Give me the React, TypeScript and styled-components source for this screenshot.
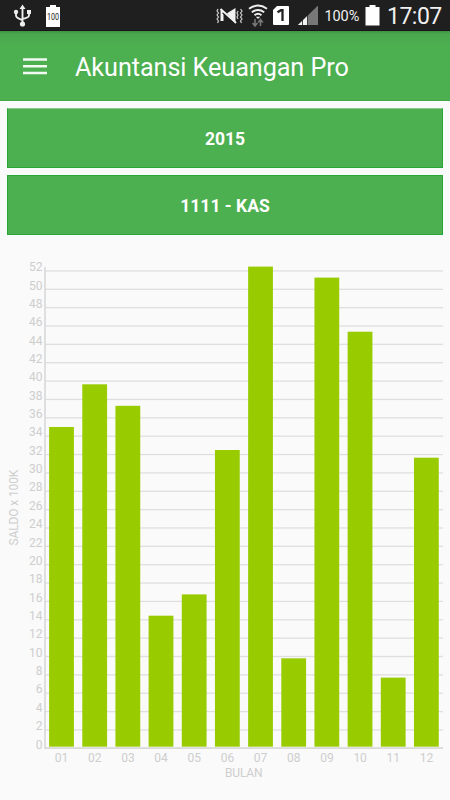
import React from "react";
import styled, { createGlobalStyle } from "styled-components";

const GlobalStyle = createGlobalStyle`
  body { margin: 0; background: #fafafa; font-family: Roboto, sans-serif; }
`;

const Screen = styled.div`
  width: 450px;
  height: 800px;
  display: flex;
  flex-direction: column;
  overflow: hidden;
  background: #fafafa;
`;

const StatusBar = styled.div`
  height: 31px;
  flex: none;
  display: flex;
  align-items: center;
  justify-content: space-between;
  padding: 0 7px 0 13px;
  box-sizing: border-box;
  background: #1f1f1f;
  color: #f0f0f0;
  border-bottom: 1px solid #1a141b;
`;

const StatusGroup = styled.div`
  display: flex;
  align-items: center;
  height: 31px;
  padding-top: 2px;
  box-sizing: border-box;
`;

const Icon = styled.svg<{ $gap?: number }>`
  display: block;
  flex: none;
  margin-right: ${(p) => p.$gap ?? 0}px;
`;

const BatteryLevel = styled.span`
  width: 36px;
  margin-right: 4px;
  font-size: 14.5px;
  line-height: 29px;
  letter-spacing: -0.1px;
  white-space: nowrap;
`;

const Clock = styled.span`
  width: 56px;
  font-size: 23px;
  line-height: 29px;
  letter-spacing: -0.5px;
  white-space: nowrap;
`;

const AppBar = styled.header`
  height: 70px;
  flex: none;
  display: flex;
  align-items: center;
  padding: 1px 0 0 23px;
  gap: 28px;
  box-sizing: border-box;
  background: linear-gradient(#419345 0, #4aa74e 3px, #4caf50 14px);
  border-bottom: 1px solid #43a847;
`;

const Title = styled.h1`
  margin: 3px 0 0;
  color: #fff;
  font-size: 25.2px;
  font-weight: 400;
  line-height: 30px;
  letter-spacing: -0.06px;
  white-space: nowrap;
`;

const Filters = styled.div`
  display: flex;
  flex: none;
  flex-direction: column;
  gap: 7px;
  padding: 7px 7px 0;
`;

const FilterButton = styled.button<{ $softTop?: boolean }>`
  height: 60px;
  padding: 1px 0 0 0;
  box-sizing: border-box;
  border: 1px solid #29a636;
  border-top-color: ${(p) => (p.$softTop ? "#8cc990" : "#29a636")};
  border-radius: 0;
  background: #4caf50;
  color: #fff;
  font: 700 17.5px Roboto, sans-serif;
`;

const Chart = styled.svg`
  display: block;
  flex: none;
  margin-top: 14px;
  font-family: Roboto, sans-serif;
  font-size: 12px;
`;

const AxisText = styled.text`
  fill: #cecece;
`;

const BASE = 748.2;
const STEP = 18.36;
const PITCH = 33.17;
const ticks = Array.from({ length: 27 }, (_, i) => i * 2);
const bars = [
  { month: "01", top: 427 },
  { month: "02", top: 384.3 },
  { month: "03", top: 405.8 },
  { month: "04", top: 615.7 },
  { month: "05", top: 594.4 },
  { month: "06", top: 450 },
  { month: "07", top: 266.6 },
  { month: "08", top: 658.3 },
  { month: "09", top: 277.6 },
  { month: "10", top: 331.7 },
  { month: "11", top: 677.6 },
  { month: "12", top: 457.7 },
];

const BalanceChart = () => (
  <Chart width="450" height="551" viewBox="0 249 450 551">
    {ticks.map((value, i) => (
      <React.Fragment key={value}>
        {i > 0 && (
          <rect x="45" y={BASE - i * STEP - 0.55} width="398" height="1.3" fill="#dfdfdf" />
        )}
        <AxisText x="42.6" y={BASE + 0.3 - i * STEP} textAnchor="end">{value}</AxisText>
      </React.Fragment>
    ))}
    <rect x="44.2" y="266.8" width="1.6" height="482" fill="#d9d9d9" />
    <rect x="45" y="747.3" width="398" height="1.6" fill="#d5d5d5" />
    {bars.map(({ month, top }, i) => (
      <React.Fragment key={month}>
        <rect x={49.1 + PITCH * i} y={top} width="24.8" height={746.7 - top} fill="#99cc00" />
        <AxisText x={61.6 + PITCH * i} y="762" textAnchor="middle">{month}</AxisText>
      </React.Fragment>
    ))}
    <AxisText x="243.8" y="777.3" textAnchor="middle" textLength="37.5">BULAN</AxisText>
    <AxisText transform="translate(17.7 507.6) rotate(-90)" textAnchor="middle" textLength="76">
      SALDO x 100K
    </AxisText>
  </Chart>
);

const UsbIcon = () => (
  <Icon width="19" height="24" viewBox="13 4 19 24" $gap={13}>
    <path d="M22.5 7v17M16 12v3.5q0 2.5 6.5 4.5M29 12v3.5q0 2-6.5 3.5" fill="none" stroke="#eee" strokeWidth="1.9" />
    <path d="M22.5 4.5l3 4.5h-6zM27 10h4v4h-4z" fill="#eee" />
    <circle cx="16" cy="12" r="2.2" fill="#eee" />
    <circle cx="22.5" cy="24" r="2.6" fill="#eee" />
  </Icon>
);

const BatteryFullIcon = () => (
  <Icon width="16" height="24" viewBox="45 4 16 24">
    <path d="M50 5h6v2h4v20H46V7h4z" fill="#fff" />
    <text x="53" y="19.6" textAnchor="middle" fontSize="8.5" fill="#111" textLength="12" lengthAdjust="spacingAndGlyphs">100</text>
  </Icon>
);

const VibrateMuteIcon = () => (
  <Icon width="27" height="20" viewBox="216 6 27 20" $gap={5}>
    <path d="M218 9l-1 2 1.500 2-1.500 2 1.500 2-1.500 2 1.500 2-1 2M240.500 9l1.500 2-1.500 2 1.500 2-1.500 2 1.500 2-1.500 2 1 2M238 11l-1 2 1 2-1 2 1 2" fill="none" stroke="#ccc" strokeWidth="1.2" />
    <path d="M220.500 10v11h3v-9zM235.500 8l-8.500 5.200 8.500 9.800z" fill="#f2f2f2" />
    <path d="M220.500 9l15.500 14" stroke="#f2f2f2" strokeWidth="2" />
    <path d="M222.500 12.800l12 11" stroke="#1f1f1f" strokeWidth="1.100" />
  </Icon>
);

const WifiIcon = () => (
  <Icon width="20" height="24" viewBox="248 3 20 24" $gap={5}>
    <g fill="none" stroke="#eee" strokeWidth="1.9">
      <path d="M249 7.800q9-6.500 18 0M251.800 11.200q6.200-4.500 12.400 0M254.500 14.200q3.500-2.700 7 0" />
    </g>
    <path d="M255.700 15.800h4.600L258 18z" fill="#eee" />
    <path d="M255 18v6M252.600 22l2.400 3 2.400-3M260.500 25v-6M258.100 21.500l2.400-3 2.400 3" fill="none" stroke="#777" strokeWidth="1.6" />
  </Icon>
);

const SimIcon = () => (
  <Icon width="16" height="20" viewBox="273 6 16 20" $gap={9}>
    <path d="M277 6h11q1 0 1 1v17q0 1-1 1h-14q-1 0-1-1V10z" fill="#fff" />
    <path d="M277.500 12.200l3.500-2h1.500V21" fill="none" stroke="#222" strokeWidth="2.300" />
  </Icon>
);

const SignalIcon = () => (
  <Icon width="20" height="20" viewBox="298 6 20 20" $gap={6.5}>
    <path d="M298 25L318 5.500V25z" fill="#777" />
    <path d="M298 25l9.500-9.300V25z" fill="#f2f2f2" />
    <path d="M302.500 18v7M307.500 14v11" stroke="#1f1f1f" strokeWidth=".8" />
  </Icon>
);

const BatteryIcon = () => (
  <Icon width="15" height="22" viewBox="365 5 15 22" $gap={7.5}>
    <path d="M369.500 5h6v2h4v18.500h-14V7h4z" fill="#fff" />
  </Icon>
);

export default function App() {
  return (
    <Screen>
      <GlobalStyle />
      <StatusBar>
        <StatusGroup>
          <UsbIcon />
          <BatteryFullIcon />
        </StatusGroup>
        <StatusGroup>
          <VibrateMuteIcon />
          <WifiIcon />
          <SimIcon />
          <SignalIcon />
          <BatteryLevel>100%</BatteryLevel>
          <BatteryIcon />
          <Clock>17:07</Clock>
        </StatusGroup>
      </StatusBar>
      <AppBar>
        <Icon width="24" height="18" viewBox="0 0 24 18">
          <path d="M0 2.500h24M0 9.200h24M0 15.900h24" stroke="#f3faf3" strokeWidth="2.500" />
        </Icon>
        <Title>Akuntansi Keuangan Pro</Title>
      </AppBar>
      <Filters>
        <FilterButton $softTop>2015</FilterButton>
        <FilterButton>1111 - KAS</FilterButton>
      </Filters>
      <BalanceChart />
    </Screen>
  );
}
